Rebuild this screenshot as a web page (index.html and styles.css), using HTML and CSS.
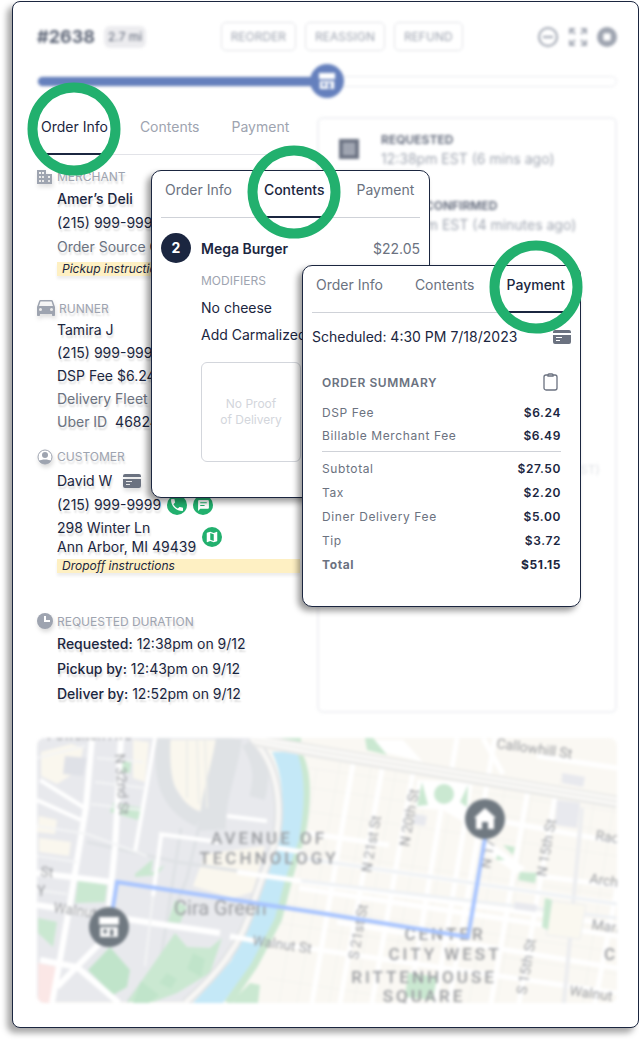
FILE: index.html
```
<!DOCTYPE html>
<html lang="en">

<head>
    <meta charset="UTF-8">
    <meta name="viewport" content="width=device-width, initial-scale=1.0">
    <link rel="stylesheet" href="styles.css">
    <title>Order #2638</title>
</head>

<body>

    <!-- shared icons -->
    <svg class="sprite" aria-hidden="true">
        <symbol id="i-card" viewBox="0 0 18 14">
            <path d="M2 0h14a2 2 0 0 1 2 2v1H0V2a2 2 0 0 1 2-2zM0 5h18v7a2 2 0 0 1-2 2H2a2 2 0 0 1-2-2zM3 7v1h6V7zM3 10v1h4v-1z" fill-rule="evenodd" />
        </symbol>
        <symbol id="i-store" viewBox="0 0 20 20">
            <path d="M1 1h18v7H1z" />
            <path d="M2 10h16v9H2zM5 12v4h3v-4zM11 12v6h3v-6z" fill-rule="evenodd" />
        </symbol>
    </svg>

    <main class="panel">
        <header class="top blur">
            <div class="title">
                <h1>#2638</h1>
                <span class="pill">2.7 mi</span>
            </div>
            <div class="actions">
                <button type="button">REORDER</button>
                <button type="button">REASSIGN</button>
                <button type="button">REFUND</button>
            </div>
            <div class="tools">
                <button type="button" aria-label="Minimize">
                    <svg width="22" height="22" viewBox="0 0 22 22"><circle cx="11" cy="11" r="9" fill="none" stroke="#9ea4b0" stroke-width="2"/><path d="M6 11h10" stroke="#9ea4b0" stroke-width="2"/></svg>
                </button>
                <button type="button" aria-label="Expand">
                    <svg width="20" height="20" viewBox="0 0 20 20" fill="none" stroke="#a6abb6" stroke-width="2"><path d="M2 7V2h5M2 2l5 5M13 2h5v5M18 2l-5 5M2 13v5h5M2 18l5-5M18 13v5h-5M18 18l-5-5"/></svg>
                </button>
                <button type="button" aria-label="Close">
                    <svg width="20" height="20" viewBox="0 0 20 20"><circle cx="10" cy="10" r="10" fill="#9ea4b0"/><path d="M7 7l6 6M13 7l-6 6" stroke="#fff" stroke-width="4"/></svg>
                </button>
            </div>
        </header>

        <div class="progress blur" role="progressbar" aria-label="Delivery progress" aria-valuenow="50">
            <div class="track">
                <div class="done" style="width: 50%"><span class="stop"><svg width="18" height="18" fill="#fff"><use href="#i-store"/></svg></span></div>
            </div>
        </div>

        <div class="columns">
            <div class="info">
                <nav class="tabs muted">
                    <button type="button" class="tab active">Order Info</button>
                    <button type="button" class="tab">Contents</button>
                    <button type="button" class="tab">Payment</button>
                </nav>

                <section class="block merchant">
                    <h2>
                        <svg width="16" height="16" viewBox="0 0 16 16" fill="#9ea4b0"><path d="M0 1h9v4h6v10H0zM2 3v2h2V3zM5 3v2h2V3zM2 7v2h2V7zM5 7v2h2V7zM2 11v2h2v-2zM5 11v2h2v-2zM11 7v2h2V7zM11 11v2h2v-2z" fill-rule="evenodd"/></svg>
                        MERCHANT
                    </h2>
                    <p class="strong">Amer’s Deli</p>
                    <p>(215) 999-9999</p>
                    <p><span class="key">Order Source</span> Online</p>
                    <p class="note">Pickup instructions</p>
                </section>

                <section class="block runner">
                    <h2>
                        <svg width="18" height="18" viewBox="3 4 18 18" fill="#9ea4b0"><path d="M18.9 6c-.2-.6-.7-1-1.4-1h-11c-.7 0-1.2.4-1.4 1L3 12v8c0 .6.4 1 1 1h1c.6 0 1-.4 1-1v-1h12v1c0 .6.4 1 1 1h1c.6 0 1-.4 1-1v-8zM6.5 16a1.5 1.5 0 1 1 0-3 1.5 1.5 0 0 1 0 3zm11 0a1.5 1.5 0 1 1 0-3 1.5 1.5 0 0 1 0 3zM5 11l1.5-4.5h11L19 11z"/></svg>
                        RUNNER
                    </h2>
                    <p>Tamira J</p>
                    <p>(215) 999-9999</p>
                    <p>DSP Fee $6.24</p>
                    <p><span class="key">Delivery Fleet</span></p>
                    <p><span class="key">Uber ID</span> &nbsp;46824</p>
                </section>

                <section class="block customer">
                    <h2>
                        <svg width="16" height="16" viewBox="0 0 16 16"><circle cx="8" cy="8" r="7" fill="#fff" stroke="#9ea4b0"/><circle cx="8" cy="6" r="3" fill="#9ea4b0"/><path d="M2 12c2-2 10-2 12 0-2 4-10 4-12 0z" fill="#9ea4b0"/></svg>
                        CUSTOMER
                    </h2>
                    <p class="line">David W <svg class="card-icon" width="18" height="14"><use href="#i-card"/></svg></p>
                    <p class="line">(215) 999-9999
                        <a href="#call" class="dot" aria-label="Call"><svg width="16" height="16" viewBox="0 0 24 24"><path d="M6.6 10.8c1.4 2.8 3.8 5.1 6.6 6.6l2.2-2.2c.3-.3.7-.4 1-.2 1.1.4 2.3.6 3.6.6.6 0 1 .4 1 1V20c0 .6-.4 1-1 1C10.6 21 3 13.4 3 4c0-.6.5-1 1-1h3.5c.6 0 1 .4 1 1 0 1.3.2 2.5.6 3.6.1.3 0 .7-.3 1z"/></svg></a>
                        <a href="#chat" class="dot" aria-label="Message"><svg width="13" height="13" viewBox="0 0 24 24"><path d="M20 2H4a2 2 0 0 0-2 2v18l4-4h14a2 2 0 0 0 2-2V4a2 2 0 0 0-2-2zM6 6h12v2H6zm0 5h8v2H6z" fill-rule="evenodd"/></svg></a>
                    </p>
                    <div class="line">
                        <address>298 Winter Ln<br>Ann Arbor, MI 49439</address>
                        <a href="#map" class="dot" aria-label="Map"><svg width="14" height="14" viewBox="0 0 24 24"><path d="M20.5 3L15 5.1 9 3 3.4 4.9 3 5.4V20.5l.5.5L9 18.9l6 2.1 5.6-1.9.4-.5V3.5zM15 19l-6-2.1V5l6 2.1z" fill-rule="evenodd"/></svg></a>
                    </div>
                    <p class="note">Dropoff instructions</p>
                </section>

                <section class="block duration">
                    <h2>
                        <svg width="16" height="16" viewBox="0 0 16 16"><circle cx="8" cy="8" r="8" fill="#9ea4b0"/><path d="M8 3v5h5" fill="none" stroke="#fff" stroke-width="2"/></svg>
                        REQUESTED DURATION
                    </h2>
                    <p><span class="strong">Requested:</span> 12:38pm on 9/12</p>
                    <p><span class="strong">Pickup by:</span> 12:43pm on 9/12</p>
                    <p><span class="strong">Deliver by:</span> 12:52pm on 9/12</p>
                </section>
            </div>

            <section class="timeline blur">
                <div class="event">
                    <svg width="20" height="20" viewBox="0 0 20 20"><path d="M0 0h20v20H0z" fill="#6d7484"/><path d="M4 4h12v12H4z" fill="#a9aeb9"/><path d="M5 7h10M5 10h10M5 13h10" stroke="#8b91a0"/></svg>
                    <div>
                        <h3>REQUESTED</h3>
                        <p>12:38pm EST (6 mins ago)</p>
                    </div>
                </div>
                <div class="event">
                    <div>
                        <h3>ORDER CONFIRMED</h3>
                        <p>12:40pm EST (4 minutes ago)</p>
                    </div>
                </div>
                <p class="later">(EST)</p>
            </section>
        </div>

        <section class="map blur">
            <svg viewBox="0 0 580 265" preserveAspectRatio="xMidYMid slice" role="img" aria-label="Delivery route">
                <rect width="580" height="265" fill="#faf8f3"/>

                <!-- west side blocks -->
                <path d="M0 0h220l22 40 2 60-28 70-26 46-40 48H0z" fill="#e8e9ed"/>
                <path d="M4 14l30-8 12 4-4 22-22 14-16-8zM2 78l18 4-2 14-18-2zM2 100l32 4-2 14-30-4zM96 2l16 2-4 40-12-4zM168 116l60-8-12 46-20 6-40-12z" fill="#faf7ee"/>
                <path d="M128 2h74l-6 40-22 34-22-6-20-30z" fill="#faf7ee"/>
                <path d="M28 18l22 2-4 18-20-2z" fill="#dfe1e7"/>
                <g fill="none" stroke="#dfe2e5">
                    <path d="M126 0c-2 40 2 66 36 82" stroke-width="15"/>
                    <path d="M192 0c-4 34-18 60-16 92" stroke-width="26"/>
                    <path d="M212 4c12 20 14 34 8 56" stroke-width="16"/>
                    <path d="M150 0v60M160 0l2 66M168 0l2 70" stroke="#eeeeea" stroke-width="2"/>
                    <path d="M50 104l90 20 150 22M144 90l-20 130-34 44M164 80l-14 60-16 40" stroke-width="3"/>
                </g>

                <!-- parks -->
                <g fill="#cae8d1">
                    <path d="M41 142l29 5-2 17-30 1zM1 180l19 4-4 25-15-14zM138 195l12 14 23 1 12-10-12 35-33 20-24 9H90zM76 65l29 5-4 12-28-8zM200 258l13-13 10 2-2 18h-25zM138 162l12 7-7 16-12-1zM84 24l10-1-1 12-8-1zM98 136l18-15-2 14 14-8-8 10-22 2z"/>
                    <path d="M240 0h24v6z"/>
                </g>
                <path d="M73 209l20 23-3 17-14 8-25-25zM156 215l12 6-4 18-14-8zM104 243l18 14-10 8H96zM130 235l10 6-6 10-12-6z" fill="#c0e4ca"/>
                <path d="M1 225l20 4-5 36H1z" fill="#fbe7e6"/>

                <!-- west side roads -->
                <g fill="none" stroke="#fff" stroke-width="6">
                    <path d="M55 0l-6 69-16 96-12 68-6 32M84 0l-6 109-6 60M0 135l75 9M0 167l62 10 121 18M3 222l37 7 42 36M65 203l-45 46"/>
                    <path d="M3 42l48 30M0 62l44 20M118 0l-14 80-6 34M122 96l60 8M190 78l40 5M124 98l-8 60" stroke-width="4"/>
                    <path d="M0 20l48-12M0 88l50 8 60 22M0 118l40 6M58 44l50 6M54 66l50 6M60 20l46 4M0 152l30 4M116 158l-8 70" stroke="#f4f5f6" stroke-width="2"/>
                </g>

                <!-- east side street grid -->
                <g fill="none" stroke="#f3f2ee">
                    <path d="M268 40l-10 60M280 30l-38 235M304 20l-44 245M334 30l-42 235M360 28l-43 237M386 72l-36 193M412 76l-34 189M440 108l-30 157M468 50l-36 215M496 50l-36 215M524 40l-40 225M558 60l-34 205M576 70l-30 195"/>
                    <path d="M262 48l318 46M262 72l318 46M262 112l318 46M250 166l330 48M236 184l344 52M230 240l160 25M272 30l308 44"/>
                </g>
                <g fill="none" stroke="#fff" stroke-width="5">
                    <path d="M317 20l-42 245M346 26l-43 239M376 34l-41 231M404 72l-32 193M430 72l-32 193M458 0l-46 265M492 46l-38 219M520 48l-38 217M580 150l-22 115M420 0l-6 36M446 0l20 36"/>
                    <path d="M264 120l316 46M240 140l340 47M262 150l318 48M193 199l387 56M300 184l280 46M468 84l112 20M262 94l90 13M500 18l80 12M486 136l94 12"/>
                </g>
                <path d="M545 70l-18 195" fill="none" stroke="#ecedef" stroke-width="4"/>
                <path d="M240 140l340 40M264 120l316 46" fill="none" stroke="#eef1f4" stroke-width="3"/>
                <path d="M380 42l56 2-6 42-24-14-28-2zM336 2h30l20 22-40-10zM448 100l40 30-8 6-34-24z" fill="#fff"/>
                <path d="M520 62l23 3-3 25-22-3zM525 35l23 4-2 10-21-4zM378 76l12 2-2 10-12-2zM478 164l22 3-1 7-22-3z" fill="#e8e9ee"/>
                <path d="M515 163l34 4-6 34-34-4z" fill="#faf8f0" stroke="#eceef0"/>

                <!-- river and its banks -->
                <path d="M260 14c10 16 12 44 4 84l-12 41-11 42-24 46-26 38" fill="none" stroke="#cae8d1" stroke-width="8"/>
                <path d="M235 14h25c9 24 8 54 2 88l-14 40-10 38-24 46-28 39h-30l38-42 22-44 10-38 16-42c4-30 6-58-7-85z" fill="#c4e8f7"/>
                <path d="M214 0c34 32 30 88 22 110l-18 50c-12 48-42 80-70 105" fill="none" stroke="#e0e2e4" stroke-width="9"/>
                <path d="M214 0c34 32 30 88 22 110l-18 50c-12 48-42 80-70 105" fill="none" stroke="#f8f7f5" stroke-width="5"/>
                <path d="M218 2l65 12 297 50" fill="none" stroke="#ebebe9" stroke-width="13"/>
                <path d="M218 0l65 11 297 50M218 4l65 12 297 50" fill="none" stroke="#fbfaf8" stroke-width="3"/>
                <path d="M200 134l64 9M193 198l26 5M240 110l26 4" fill="none" stroke="#fff" stroke-width="5"/>

                <!-- squares east of the river -->
                <g fill="#cae8d1">
                    <circle cx="407" cy="56" r="10"/>
                    <path d="M385 44l6 23-11 1zM431 47l-1 22-7-5zM328 0h8l14 17-20-5zM466 107l12 2-2 8zM460 117l8 5h-9zM371 235l29 4-4 23-28-3zM483 134l17 1-2 10-17-3zM508 160l7 2-4 30-6-3z"/>
                </g>

                <!-- labels -->
                <g class="district">
                    <text x="232" y="106">AVENUE OF</text>
                    <text x="232" y="126">TECHNOLOGY</text>
                    <text x="408" y="202">CENTER</text>
                    <text x="408" y="222">CITY WEST</text>
                    <text x="387" y="245">RITTENHOUSE</text>
                    <text x="387" y="264">SQUARE</text>
                    <text x="574" y="222">C</text>
                </g>
                <text class="place" x="137" y="177">Cira Green</text>
                <g class="street">
                    <text transform="translate(459 10) rotate(8)">Callowhill St</text>
                    <text transform="translate(334 135) rotate(-80)">N 21st St</text>
                    <text transform="translate(372 109) rotate(-80)">N 20th St</text>
                    <text transform="translate(453 131) rotate(-80)">N 17</text>
                    <text transform="translate(509 139) rotate(-80)">N 15th St</text>
                    <text transform="translate(321 222) rotate(-80)">S 21st St</text>
                    <text transform="translate(489 257) rotate(-80)">S 15th St</text>
                    <text transform="translate(558 102) rotate(8)">Race</text>
                    <text transform="translate(552 145) rotate(8)">Arch</text>
                    <text transform="translate(554 191) rotate(8)">Market</text>
                    <text transform="translate(532 257) rotate(8)">Walnut</text>
                    <text transform="translate(215 207) rotate(8)">Walnut St</text>
                    <text transform="translate(16 174) rotate(8)">Walnut</text>
                    <text transform="translate(3 138) rotate(6)">St</text>
                    <text transform="translate(0 158)">Y</text>
                    <text transform="translate(78 16) rotate(86)">N 32nd St</text>
                    <text transform="translate(10 2)">Powelton Ave</text>
                </g>

                <path d="M75 175l5-31 203 31 148 24 17-99" fill="none" stroke="#a6c3ff" stroke-width="4"/>
                <circle cx="72" cy="189" r="20" fill="#707981"/>
                <use href="#i-store" x="61" y="178" width="22" height="22" fill="#fff"/>
                <circle cx="448" cy="81" r="20" fill="#707981"/>
                <path d="M448 70l11 10h-2v11h-6v-7h-6v7h-6V80h-2z" fill="#fff"/>
            </svg>
        </section>

        <section class="card contents">
            <nav class="tabs">
                <button type="button" class="tab">Order Info</button>
                <button type="button" class="tab active">Contents</button>
                <button type="button" class="tab">Payment</button>
            </nav>
            <div class="item">
                <span class="count">2</span>
                <strong>Mega Burger</strong>
                <span class="price">$22.05</span>
            </div>
            <div class="modifiers">
                <h2>MODIFIERS</h2>
                <p>No cheese</p>
                <p>Add Carmalized</p>
                <div class="proof">No Proof<br>of Delivery</div>
            </div>
        </section>

        <section class="card payment">
            <nav class="tabs">
                <button type="button" class="tab">Order Info</button>
                <button type="button" class="tab">Contents</button>
                <button type="button" class="tab active">Payment</button>
            </nav>
            <div class="scheduled">
                <span>Scheduled: 4:30 PM 7/18/2023</span>
                <svg class="card-icon" width="18" height="14"><use href="#i-card"/></svg>
            </div>
            <div class="summary">
                <div class="summary-head">
                    <h2>ORDER SUMMARY</h2>
                    <button type="button" aria-label="Copy summary">
                        <svg width="18" height="20" viewBox="0 0 18 20" fill="none" stroke="#6b7280" stroke-width="1.3"><rect x="1" y="3" width="13" height="15" rx="2"/><path d="M5 4V3q0-1 1-1h3q1 0 1 1v1z" fill="#fff"/></svg>
                    </button>
                </div>
                <table>
                    <tbody class="fees">
                        <tr><th scope="row">DSP Fee</th><td>$6.24</td></tr>
                        <tr><th scope="row">Billable Merchant Fee</th><td>$6.49</td></tr>
                    </tbody>
                    <tbody class="totals">
                        <tr><th scope="row">Subtotal</th><td>$27.50</td></tr>
                        <tr><th scope="row">Tax</th><td>$2.20</td></tr>
                        <tr><th scope="row">Diner Delivery Fee</th><td>$5.00</td></tr>
                        <tr><th scope="row">Tip</th><td>$3.72</td></tr>
                        <tr class="total"><th scope="row">Total</th><td>$51.15</td></tr>
                    </tbody>
                </table>
            </div>
        </section>
    </main>

</body>

</html>
```

FILE: styles.css
```
*,
*::after {
    margin: 0;
    padding: 0;
    box-sizing: border-box;
}

body {
    font-family: Inter, "Liberation Sans", sans-serif;
    font-size: 14px;
    color: #1b2640;
    background-color: #fff;
}

button {
    font: inherit;
    color: inherit;
    background: none;
    border: 0;
    cursor: pointer;
}

svg {
    display: block;
    flex: none;
}

.sprite {
    position: absolute;
    width: 0;
    height: 0;
}

.blur {
    filter: blur(.1em);
}

.panel {
    position: relative;
    margin: 1px 0 12px 12px;
    padding: 20px 21px 24px 24px;
    background: #fff;
    border: 1px solid #1b2640;
    border-radius: 8px;
    box-shadow: -5px 5px 6px rgba(0, 0, 0, .35);
}

/* header */
.top {
    display: flex;
    justify-content: space-between;
    align-items: center;
    color: #5d6576;
}

.title,
.actions,
.tools {
    display: flex;
    align-items: center;
    gap: 9px;
}

.title h1 {
    font-size: 18px;
    font-weight: 700;
}

.pill {
    padding: 2px 4px;
    font-size: 12px;
    line-height: 18px;
    background: #ececef;
    border-radius: 6px;
}

.actions button {
    height: 29px;
    padding: 0 9px;
    font-size: 12px;
    color: #9ea4b0;
    border: 1px solid #dfe1e5;
    border-radius: 5px;
}

.progress {
    display: flex;
    align-items: center;
    height: 34px;
    margin-top: 13px;
}

.track {
    flex: 1;
    height: 11px;
    border: 1px solid #e9eaee;
    border-radius: 6px;
}

.done {
    display: flex;
    justify-content: flex-end;
    align-items: center;
    height: 9px;
    background: #6580bd;
    border-radius: 5px;
}

.stop {
    display: flex;
    justify-content: center;
    align-items: center;
    width: 34px;
    height: 34px;
    margin-right: -17px;
    flex: none;
    background: #6580bd;
    border-radius: 50%;
}

.columns {
    display: grid;
    grid-template-columns: 263fr 300fr;
    gap: 17px;
    margin-top: 10px;
}

/* tabs */
.tabs {
    display: flex;
    gap: 32px;
    padding: 0 4px;
    white-space: nowrap;
    border-bottom: 1px solid #cfd2d8;
}

.tab {
    position: relative;
    padding: 10px 0 18px;
    line-height: 18px;
    color: #6b7280;
}

.muted {
    border-color: #e2e3e8;
}

.muted .tab {
    color: #9ea4b0;
}

.tabs .active {
    font-weight: 500;
    color: #1b2640;
    box-shadow: 0 1px 0 #1b2640, inset 0 -1px 0 #1b2640;
}

.muted .active {
    font-weight: 400;
}

/* green ring round the selected tab */
.active::after {
    content: "";
    position: absolute;
    top: 21px;
    left: 50%;
    z-index: 2;
    width: 93px;
    height: 93px;
    border: 10px solid #22b06e;
    border-radius: 50%;
    transform: translate(-50%, -50%);
    pointer-events: none;
}

/* left column */
.info {
    padding-bottom: 7px;
    text-shadow: 1px 3px 2px rgba(0, 0, 0, .14);
}

.block {
    padding-left: 20px;
    line-height: 24px;
}

.block h2 {
    display: flex;
    align-items: center;
    gap: 4px;
    height: 20px;
    margin-left: -20px;
}

.block svg {
    filter: drop-shadow(1px 3px 2px rgba(0, 0, 0, .14));
}

h2 {
    font-size: 12px;
    font-weight: 400;
    color: #9ea4b0;
}

.merchant {
    margin-top: 12px;
}

.runner {
    margin-top: 22px;
    line-height: 23px;
}

.customer {
    margin-top: 14px;
}

.customer h2 {
    margin-bottom: 2px;
}

.duration {
    margin-top: 38px;
    line-height: 25px;
}

.strong {
    font-weight: 500;
}

.key {
    color: #6b7280;
}

.note {
    margin-top: 3px;
    padding-left: 5px;
    font-size: 12px;
    font-style: italic;
    line-height: 14px;
    background: #fef0c3;
    box-shadow: 0 3px 3px rgba(0, 0, 0, .07);
    text-shadow: none;
}

.line {
    display: flex;
    align-items: center;
    gap: 6px;
}

.card-icon {
    fill: #6b7280;
}

.line .card-icon {
    margin-left: 5px;
}

address {
    padding-top: 1px;
    font-style: normal;
    line-height: 19px;
}

.dot {
    display: flex;
    justify-content: center;
    align-items: center;
    width: 20px;
    height: 20px;
    background: #22b06e;
    border-radius: 50%;
}

.dot svg {
    fill: #fff;
    filter: none;
}

/* right column */
.timeline {
    margin-top: 9px;
    padding: 11px 15px 14px 20px;
    color: #a0a6b1;
    border: 2px solid #f0f1f4;
    border-radius: 6px;
}

.event {
    display: grid;
    grid-template-columns: 20px 1fr;
    gap: 22px;
    align-items: center;
    margin-bottom: 28px;
    line-height: 19px;
}

.event div {
    grid-column: 2;
}

.event h3 {
    font-size: 12px;
    font-weight: 700;
    color: #6d7484;
}

.later {
    margin-top: 228px;
    font-size: 12px;
    text-align: right;
    color: #dfe1e5;
}

/* map */
.map {
    height: 265px;
    margin-top: 25px;
    overflow: hidden;
    border-radius: 8px;
}

.map svg {
    width: 100%;
    height: 100%;
}

.map text {
    font-family: Roboto, "Liberation Sans", sans-serif;
    fill: #9b9da1;
}

.map .district text {
    font-size: 17px;
    font-weight: 500;
    letter-spacing: 3px;
    text-anchor: middle;
}

.map .place {
    font-size: 20px;
}

.map .street text {
    font-size: 14px;
}

/* floating cards */
.card {
    position: absolute;
    width: 279px;
    padding: 0 9px;
    background: #fff;
    border: 1px solid #1b2640;
    border-radius: 10px;
    box-shadow: -4px 4px 6px rgba(0, 0, 0, .4);
}

.contents {
    top: 168px;
    left: 138px;
    padding-bottom: 35px;
}

.payment {
    top: 263px;
    left: 289px;
    padding-bottom: 30px;
}

.item {
    display: flex;
    align-items: center;
    gap: 10px;
    margin-top: 15px;
}

.item strong {
    font-weight: 600;
}

.count {
    width: 30px;
    height: 30px;
    font-weight: 700;
    line-height: 30px;
    text-align: center;
    color: #fff;
    background: #1b2640;
    border-radius: 50%;
}

.price {
    margin-left: auto;
    color: #6b7280;
}

.modifiers {
    padding: 4px 0 0 40px;
    line-height: 27px;
}

.proof {
    display: grid;
    place-content: center;
    width: 100px;
    height: 100px;
    margin-top: 14px;
    font-size: 12px;
    line-height: 16px;
    text-align: center;
    color: #d3d6dc;
    border: 1px solid #d3d6dc;
    border-radius: 6px;
}

.scheduled {
    display: flex;
    justify-content: space-between;
    align-items: center;
    margin-top: 14px;
    line-height: 20px;
}

.summary {
    padding: 22px 10px 0;
    font-size: 12px;
    letter-spacing: .05em;
}

.summary-head {
    display: flex;
    justify-content: space-between;
    align-items: center;
    height: 26px;
    margin-bottom: 5px;
}

.summary h2 {
    font-weight: 600;
    color: #6b7280;
}

table {
    width: 100%;
    border-collapse: collapse;
}

th,
td {
    height: 24px;
    font-weight: 400;
    text-align: left;
    color: #6b7280;
}

td {
    font-weight: 600;
    text-align: right;
    color: #1b2640;
}

.fees tr:last-child > * {
    height: 27px;
    padding-bottom: 3px;
}

.totals {
    border-top: 1px solid #cfd2d8;
}

.totals tr:first-child > * {
    height: 29px;
    padding-top: 5px;
}

.total > * {
    font-weight: 700;
}
```
